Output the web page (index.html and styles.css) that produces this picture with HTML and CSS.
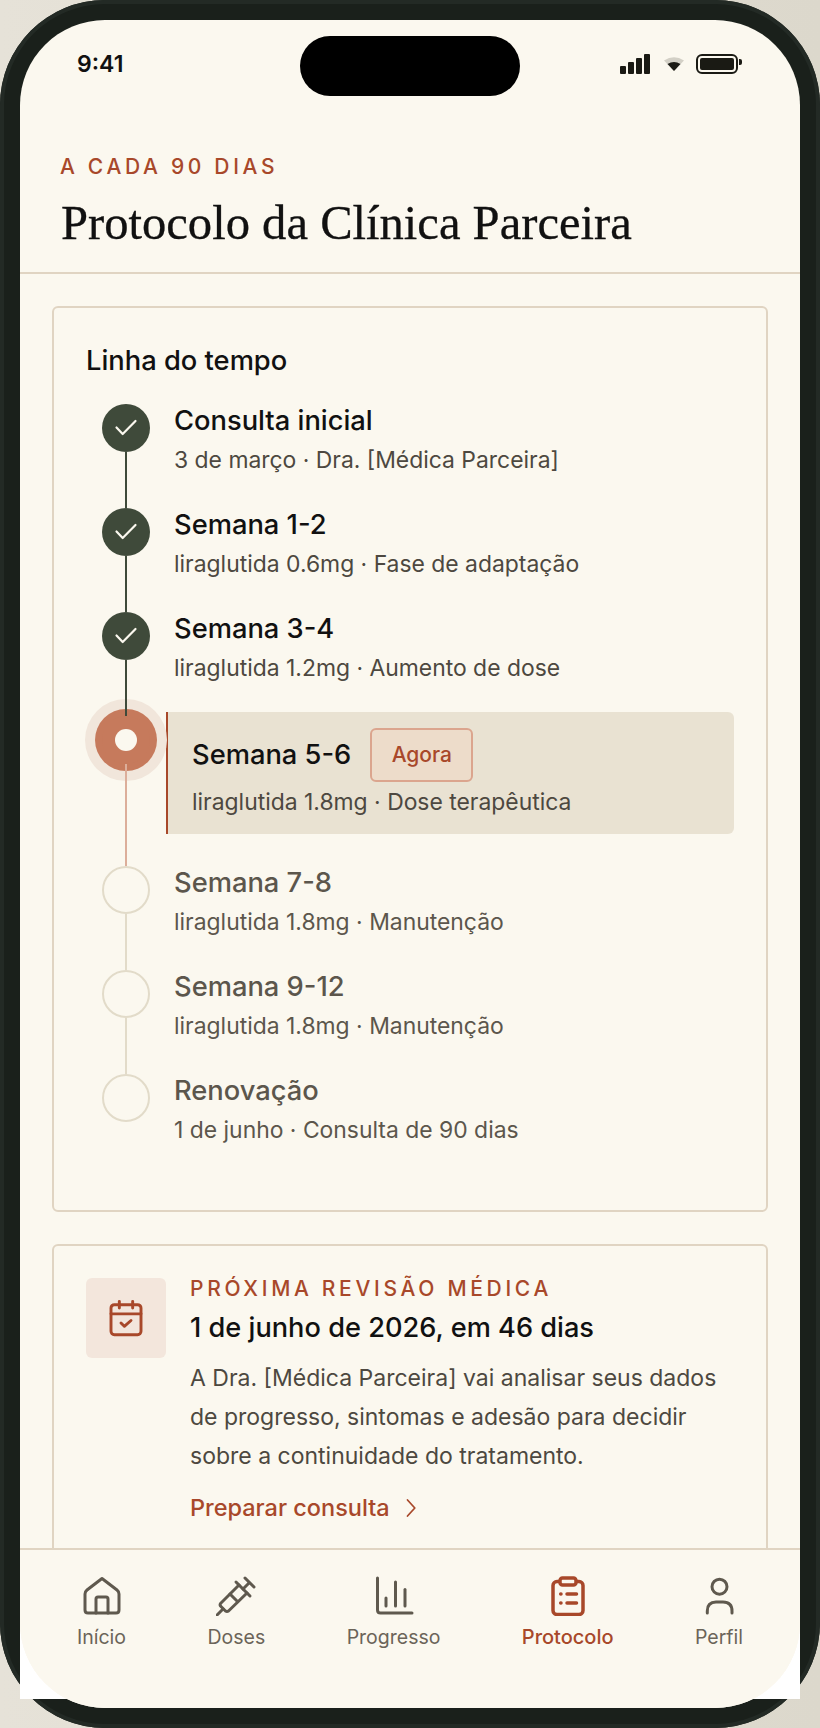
FILE: index.html
```html
<!DOCTYPE html>
<html lang="pt-BR">
<head>
  <meta charset="UTF-8">
  <title>Protocolo da Clínica Parceira</title>
  <link rel="stylesheet" href="styles.css">
</head>
<body>
  <div class="phone">
    <div class="screen">
      <div class="status-bar">
        <span class="time">9:41</span>
        <div class="island"></div>
        <div class="status-icons">
          <div class="signal"><i></i><i></i><i></i><i></i></div>
          <svg class="wifi" width="20" height="14" viewBox="0 0 20 14">
            <path d="M0 3.5 Q10 -3 20 3.5 L10 14 Z" fill="#d3d0c6"/>
            <path d="M3.5 7 Q10 3 16.5 7 L10 14 Z" fill="#1a1a14"/>
          </svg>
          <div class="battery"><div class="battery-fill"></div></div>
        </div>
      </div>

      <header class="page-header">
        <div class="eyebrow">A CADA 90 DIAS</div>
        <h1>Protocolo da Clínica Parceira</h1>
      </header>

      <main class="scroll">
        <section class="card">
          <h2>Linha do tempo</h2>
          <div class="timeline">
            <div class="row done">
              <div class="node"><svg width="48" height="48" viewBox="0 0 48 48"><path d="M14.5 23.5 L20.7 30 L33.5 17"/></svg></div>
              <div class="row-text">
                <div class="row-title">Consulta inicial</div>
                <div class="row-sub">3 de março · Dra. [Médica Parceira]</div>
              </div>
            </div>
            <div class="row done">
              <div class="node"><svg width="48" height="48" viewBox="0 0 48 48"><path d="M14.5 23.5 L20.7 30 L33.5 17"/></svg></div>
              <div class="row-text">
                <div class="row-title">Semana 1-2</div>
                <div class="row-sub">liraglutida 0.6mg · Fase de adaptação</div>
              </div>
            </div>
            <div class="row done before-current">
              <div class="node"><svg width="48" height="48" viewBox="0 0 48 48"><path d="M14.5 23.5 L20.7 30 L33.5 17"/></svg></div>
              <div class="row-text">
                <div class="row-title">Semana 3-4</div>
                <div class="row-sub">liraglutida 1.2mg · Aumento de dose</div>
              </div>
            </div>
            <div class="row current">
              <div class="node"><span class="node-dot"></span></div>
              <div class="row-text">
                <div class="row-title">Semana 5-6 <span class="badge">Agora</span></div>
                <div class="row-sub">liraglutida 1.8mg · Dose terapêutica</div>
              </div>
            </div>
            <div class="row todo">
              <div class="node"></div>
              <div class="row-text">
                <div class="row-title">Semana 7-8</div>
                <div class="row-sub">liraglutida 1.8mg · Manutenção</div>
              </div>
            </div>
            <div class="row todo">
              <div class="node"></div>
              <div class="row-text">
                <div class="row-title">Semana 9-12</div>
                <div class="row-sub">liraglutida 1.8mg · Manutenção</div>
              </div>
            </div>
            <div class="row todo last">
              <div class="node"></div>
              <div class="row-text">
                <div class="row-title">Renovação</div>
                <div class="row-sub">1 de junho · Consulta de 90 dias</div>
              </div>
            </div>
          </div>
        </section>

        <section class="card review">
          <div class="review-icon">
            <svg width="40" height="40" viewBox="0 0 24 24" fill="none" stroke="#a8482a" stroke-width="1.75" stroke-linecap="round" stroke-linejoin="round">
              <rect x="3" y="4" width="18" height="18" rx="2"/>
              <path d="M8 2v4M16 2v4M3 9.5h18M9 15l2 2 4-3.5"/>
            </svg>
          </div>
          <div class="review-body">
            <div class="eyebrow small">PRÓXIMA REVISÃO MÉDICA</div>
            <div class="review-date">1 de junho de 2026, em 46 dias</div>
            <p>A Dra. [Médica Parceira] vai analisar seus dados de progresso, sintomas e adesão para decidir sobre a continuidade do tratamento.</p>
            <a class="review-link" href="#">Preparar consulta
              <svg width="10" height="22" viewBox="0 0 10 22" fill="none" stroke="#a8482a" stroke-width="1.75" stroke-linecap="round" stroke-linejoin="round"><path d="M1.5 3 L8.8 11 L1.5 19"/></svg>
            </a>
          </div>
        </section>
      </main>

      <nav class="tabbar">
        <a class="tab" href="#">
          <svg width="40" height="40" viewBox="0 0 40 40"><path d="M20 2.5 L35 14 Q37 15.6 37 18 V34 Q37 37 34 37 H6 Q3 37 3 34 V18 Q3 15.6 5 14 Z"/><path d="M14 37 V23 Q14 21 16 21 H24 Q26 21 26 23 V37"/></svg>
          <span>Início</span>
        </a>
        <a class="tab" href="#">
          <svg width="40" height="40" viewBox="0 0 40 40"><path d="M1 39 L7 33"/><path d="M23 9 L4.5 27.5 Q3.5 29 5 30.5 L9.5 35 Q11 36 12.5 35 L31 17"/><path d="M20 6 L34 20"/><path d="M27 13 L33 7"/><path d="M29 2 L38 11"/><path d="M14 18 L21.5 25.5"/></svg>
          <span>Doses</span>
        </a>
        <a class="tab" href="#">
          <svg width="40" height="40" viewBox="0 0 40 40"><path d="M3.5 2 V34 Q3.5 37 6.5 37 H38"/><path d="M12 22 V30"/><path d="M21.5 6 V30"/><path d="M31 13.5 V30"/></svg>
          <span>Progresso</span>
        </a>
        <a class="tab active" href="#">
          <svg width="40" height="40" viewBox="0 0 40 40"><rect x="5" y="5.5" width="30" height="33" rx="4"/><rect class="clip" x="12" y="2" width="16" height="7" rx="2.5"/><path d="M12.7 18 H13 M12.7 27 H13 M19 18 H28.5 M19 27 H28.5"/></svg>
          <span>Protocolo</span>
        </a>
        <a class="tab" href="#">
          <svg width="40" height="40" viewBox="0 0 40 40"><circle cx="20.5" cy="10.7" r="7.5"/><path d="M8.3 37 V35 Q8.3 26 17 26 H24 Q33 26 33 35 V37"/></svg>
          <span>Perfil</span>
        </a>
      </nav>
    </div>
  </div>
</body>
</html>
```

FILE: styles.css
```css
* {
  box-sizing: border-box;
}
html, body {
  margin: 0;
  height: 100%;
}
body {
  width: 820px;
  height: 1728px;
  overflow: hidden;
  background: linear-gradient(90deg, #e6e2d8, #dcd8cc);
  font-family: Inter, "Liberation Sans", sans-serif;
  color: #111;
}
a {
  text-decoration: none;
  color: inherit;
}

/* device */
.phone {
  position: relative;
  width: 820px;
  height: 1728px;
  padding: 20px;
  background: #1a201b;
  border-radius: 105px;
  box-shadow: inset 0 0 0 4px #232a25;
}
.phone::before {
  content: "";
  position: absolute;
  left: 20px;
  right: 20px;
  top: 1600px;
  height: 99px;
  background: #fff;
}
.screen {
  position: relative;
  display: flex;
  flex-direction: column;
  height: 1688px;
  background: #fbf8ef;
  border-radius: 85px;
  overflow: hidden;
}

/* status bar */
.status-bar {
  display: flex;
  justify-content: space-between;
  align-items: center;
  height: 88px;
  padding: 0 62px 0 57px;
  flex-shrink: 0;
}
.time {
  font-size: 23px;
  font-weight: 600;
}
.island {
  position: absolute;
  top: 16px;
  left: 280px;
  width: 220px;
  height: 60px;
  background: #000;
  border-radius: 30px;
}
.status-icons {
  display: flex;
  align-items: center;
  gap: 14px;
}
.signal {
  display: flex;
  align-items: flex-end;
  gap: 2px;
  height: 20px;
}
.signal i {
  width: 6px;
  background: #1a1a14;
  border-radius: 1px;
}
.signal i:nth-child(1) { height: 8px; }
.signal i:nth-child(2) { height: 12px; }
.signal i:nth-child(3) { height: 16px; }
.signal i:nth-child(4) { height: 20px; }
.battery {
  position: relative;
  width: 42px;
  height: 20px;
  padding: 2px;
  border: 2px solid #1a1a14;
  border-radius: 6px;
  margin-left: -2px;
}
.battery::after {
  content: "";
  position: absolute;
  right: -6px;
  top: 3px;
  width: 3px;
  height: 6px;
  background: #1a1a14;
  border-radius: 0 2px 2px 0;
}
.battery-fill {
  height: 100%;
  background: #1a1a14;
  border-radius: 2px;
}

/* header */
.page-header {
  padding: 47px 40px 0;
  height: 166px;
  border-bottom: 2px solid #e0d4c2;
  flex-shrink: 0;
}
.eyebrow {
  font-size: 21px;
  line-height: 24px;
  font-weight: 500;
  letter-spacing: 0.175em;
  color: #a8482a;
}
h1 {
  margin: 16px 0 0 1px;
  font-family: "Liberation Serif", serif;
  font-size: 48.6px;
  line-height: 56px;
  font-weight: 400;
  color: #111;
  -webkit-text-stroke: 0.3px #111;
}

/* content */
.scroll {
  flex: 1;
  min-height: 0;
  overflow: hidden;
  padding: 32px 32px 0;
}
.card {
  border: 2px solid #e0d4c2;
  border-radius: 6px;
  padding: 32px;
  margin-bottom: 32px;
}
h2 {
  margin: 0 0 22px;
  font-size: 27.3px;
  line-height: 42px;
  font-weight: 500;
}
.timeline {
  margin: 0 0 0 16px;
}
.row {
  position: relative;
  display: flex;
  gap: 16px;
  margin-bottom: 32px;
  height: 72px;
}
.node {
  position: relative;
  flex: 0 0 48px;
  width: 48px;
  height: 48px;
  border-radius: 50%;
}
.row::after {
  content: "";
  position: absolute;
  left: 23px;
  top: 48px;
  width: 2px;
  height: 56px;
  background: #3f4a3a;
}
.done .node {
  background: #3f4a3a;
}
.done svg {
  display: block;
  fill: none;
  stroke: #fbf8ef;
  stroke-width: 2.2;
  stroke-linecap: round;
  stroke-linejoin: round;
}
.row.before-current::after {
  z-index: 2;
}
.row-text {
  padding: 1px 0 0 8px;
}
.row-title {
  font-size: 27.3px;
  line-height: 32px;
  font-weight: 500;
}
.row-sub {
  margin-top: 7px;
  font-size: 22.9px;
  line-height: 32px;
  color: #4d4840;
}
.todo .node {
  border: 2px solid #e2dbc9;
}
.todo::after {
  background: #e2dbc9;
}
.todo.last::after {
  display: none;
}
.todo .row-title {
  color: #5c564c;
}
.todo .row-sub {
  color: #5c564c;
}

/* current step */
.current {
  height: 122px;
  margin-top: -4px;
}
.current::after {
  top: 52px;
  height: 102px;
  background: #dcae9a;
  z-index: 2;
}
.current .node {
  margin: 4px 0 0;
  background: #c67a5c;
  box-shadow: 0 0 0 7px #c67a5c, 0 0 0 17px #f1e6db;
  display: flex;
  align-items: center;
  justify-content: center;
}
.node-dot {
  width: 22px;
  height: 22px;
  border-radius: 50%;
  background: #fbf8ef;
}
.current .row-text {
  flex: 1;
  padding: 16px 24px 0 24px;
  background: #e9e2d2;
  border-left: 2px solid #a8482a;
  border-radius: 0 6px 6px 0;
}
.current .row-title {
  display: flex;
  align-items: center;
  gap: 19px;
  height: 54px;
}
.current .row-sub {
  margin-top: 4px;
}
.badge {
  display: flex;
  align-items: center;
  justify-content: center;
  width: 103px;
  height: 54px;
  background: #eddcca;
  border: 2px solid #dba58e;
  border-radius: 6px;
  font-size: 21px;
  font-weight: 500;
  color: #a8482a;
}

/* review card */
.review {
  display: flex;
  gap: 24px;
}
.review-icon {
  flex: 0 0 80px;
  height: 80px;
  background: #f3e6dc;
  border-radius: 6px;
  display: flex;
  align-items: center;
  justify-content: center;
}
.eyebrow.small {
  line-height: 22px;
}
.review-date {
  margin-top: 10px;
  font-size: 27.2px;
  line-height: 36px;
  font-weight: 500;
}
.review p {
  margin: 13px 0 0;
  font-size: 23px;
  line-height: 39px;
  color: #4d4840;
}
.review-link {
  display: flex;
  align-items: center;
  gap: 16px;
  margin-top: 16px;
  font-size: 23.5px;
  line-height: 32px;
  font-weight: 500;
  color: #a8482a;
}

/* tab bar */
.tabbar {
  display: flex;
  justify-content: space-between;
  height: 160px;
  padding: 26px 57px 0;
  flex-shrink: 0;
  background: #fbf8ef;
  border-top: 2px solid #e0d4c2;
}
.tab {
  display: flex;
  flex-direction: column;
  align-items: center;
  gap: 7px;
  font-size: 19.5px;
  line-height: 28px;
  color: #6b6459;
}
.tab svg {
  fill: none;
  stroke: #5f594e;
  stroke-width: 3;
  stroke-linecap: round;
  stroke-linejoin: round;
}
.tab.active {
  color: #a8482a;
  font-size: 20px;
  font-weight: 500;
}
.tab.active svg {
  stroke: #a8482a;
  stroke-width: 3.5;
}
.tab.active .clip {
  fill: #fbf8ef;
}
```
